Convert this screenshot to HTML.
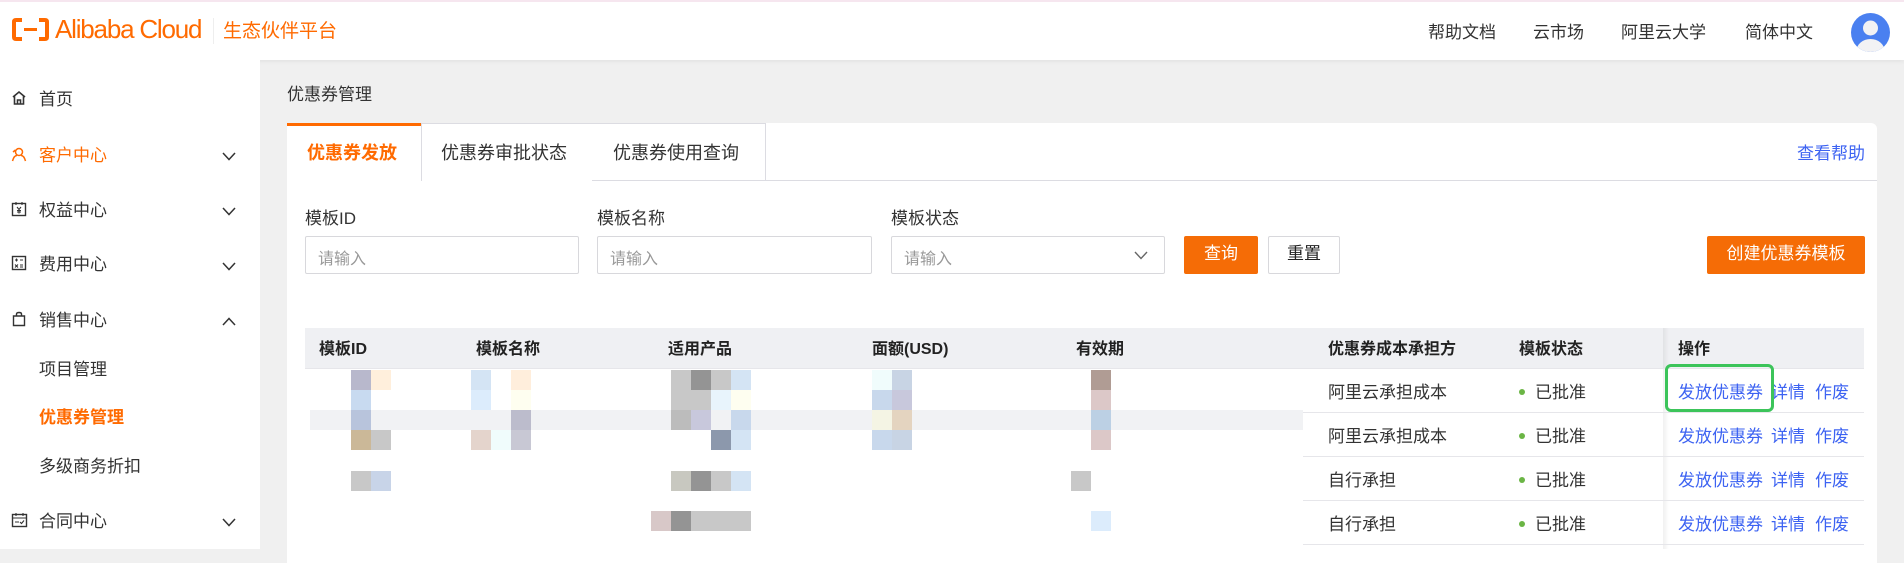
<!DOCTYPE html>
<html><head><meta charset="utf-8"><style>
*{margin:0;padding:0;box-sizing:border-box}
body{width:1904px;height:549px;overflow:hidden;background:#f0f0f0;font-family:"Liberation Sans","Noto Sans CJK SC",sans-serif;color:#333;position:relative;font-size:17px}
.a{position:absolute;white-space:nowrap}
.hdr{position:absolute;left:0;top:0;width:1904px;height:60px;background:#fff;border-top:2px solid #f6e6ef;box-shadow:0 2px 4px rgba(0,0,0,.05)}
.side{position:absolute;left:0;top:60px;width:260px;height:489px;background:#fff}
.or{color:#ff6a00}
.bl{color:#3d63f2}
.card{position:absolute;left:287px;top:123px;width:1590px;height:440px;background:#fff;border-radius:6px 6px 0 0}
.inp{position:absolute;top:236px;height:38px;border:1px solid #d8d8dc;border-radius:2px;background:#fff;color:#999;font-size:16px;padding:8px 12px}
.b{position:absolute;width:20px;height:20px}
.th{font-weight:bold;color:#222;font-size:16px}
.row{position:absolute;left:305px;width:1559px;height:1px;background:#e6e6ea}
.dot{display:inline-block;width:6px;height:6px;border-radius:50%;background:#6bb545;vertical-align:middle;margin:0 10px 4px 0}
</style></head><body>
<div class="hdr">
 <svg class="a" style="left:12px;top:16px" width="37" height="23" viewBox="0 0 37 23"><path d="M10 2H4Q2 2 2 4V19Q2 21 4 21H10M27 2H33Q35 2 35 4V19Q35 21 33 21H27" fill="none" stroke="#ff6a00" stroke-width="4"/><rect x="12" y="10" width="13" height="3" fill="#ff6a00"/></svg>
 <div class="a or" style="left:55px;top:12px;font-size:26px;letter-spacing:-1.2px;font-weight:500">Alibaba Cloud</div>
 <div class="a" style="left:213px;top:16px;width:1px;height:26px;background:#eee"></div>
 <div class="a or" style="left:223px;top:14px;font-size:19px">生态伙伴平台</div>
 <div class="a" style="left:1428px;top:16px">帮助文档</div>
 <div class="a" style="left:1533px;top:16px">云市场</div>
 <div class="a" style="left:1621px;top:16px">阿里云大学</div>
 <div class="a" style="left:1745px;top:16px">简体中文</div>
 <svg class="a" style="left:1851px;top:11px" width="39" height="39" viewBox="0 0 39 39"><defs><clipPath id="c"><circle cx="19.5" cy="19.5" r="19.5"/></clipPath></defs><circle cx="19.5" cy="19.5" r="19.5" fill="#4a80f0"/><g clip-path="url(#c)"><circle cx="19.5" cy="15" r="7.5" fill="#f2f2f4"/><ellipse cx="19.5" cy="38" rx="14" ry="12" fill="#f2f2f4"/></g></svg>
</div>
<div class="side">
 <svg class="a" style="left:11px;top:30px" width="16" height="16" viewBox="0 0 16 16"><path d="M2 7L8 2L14 7M3.5 6V14H12.5V6M6.5 14V10H9.5V14" fill="none" stroke="#333" stroke-width="1.6"/></svg>
 <div class="a" style="left:39px;top:25px">首页</div>
 <svg class="a" style="left:11px;top:86px" width="16" height="16" viewBox="0 0 16 16"><circle cx="8" cy="6" r="3.5" fill="none" stroke="#ff6a00" stroke-width="1.5"/><path d="M1.5 15Q3 9.5 6 9.5M14.5 15Q13 9.5 10 9.5M4.5 4L2 6" fill="none" stroke="#ff6a00" stroke-width="1.5"/></svg>
 <div class="a or" style="left:39px;top:81px">客户中心</div>
 <svg class="a" style="left:11px;top:141px" width="16" height="16" viewBox="0 0 16 16"><rect x="1.5" y="2.5" width="13" height="12" fill="none" stroke="#333" stroke-width="1.4"/><path d="M5 1V4M11 1V4M6 6L8 8.5L10 6M8 8.5V12.5M6 9.5H10M6 11H10" fill="none" stroke="#333" stroke-width="1.1"/></svg>
 <div class="a" style="left:39px;top:136px">权益中心</div>
 <svg class="a" style="left:11px;top:195px" width="16" height="16" viewBox="0 0 16 16"><rect x="1.5" y="1.5" width="13" height="13" fill="none" stroke="#333" stroke-width="1.4"/><path d="M4 5H7M5.5 3.5V6.5M9 5H12M4 9.5L7 12.5M7 9.5L4 12.5M9 10H12M9 12H12" fill="none" stroke="#333" stroke-width="1.1"/></svg>
 <div class="a" style="left:39px;top:190px">费用中心</div>
 <svg class="a" style="left:11px;top:251px" width="16" height="16" viewBox="0 0 16 16"><path d="M2.5 5H13.5V14.5H2.5ZM5.5 5V3Q5.5 1.5 8 1.5Q10.5 1.5 10.5 3V5" fill="none" stroke="#333" stroke-width="1.4"/></svg>
 <div class="a" style="left:39px;top:246px">销售中心</div>
 <div class="a" style="left:39px;top:295px">项目管理</div>
 <div class="a or" style="left:39px;top:343px;font-weight:bold">优惠券管理</div>
 <div class="a" style="left:39px;top:392px">多级商务折扣</div>
 <svg class="a" style="left:11px;top:452px" width="17" height="16" viewBox="0 0 17 16"><rect x="1.5" y="2.5" width="14" height="12" fill="none" stroke="#333" stroke-width="1.4"/><path d="M1.5 6H15.5M5 1V4M12 1V4M4 10H8M9 10L10.5 11.5L13 8.5" fill="none" stroke="#333" stroke-width="1.1"/></svg>
 <div class="a" style="left:39px;top:447px">合同中心</div>
 <svg class="a" style="left:222px;top:92px" width="14" height="9" viewBox="0 0 14 9"><path d="M1 1L7 7.5L13 1" fill="none" stroke="#333" stroke-width="1.5"/></svg>
 <svg class="a" style="left:222px;top:147px" width="14" height="9" viewBox="0 0 14 9"><path d="M1 1L7 7.5L13 1" fill="none" stroke="#333" stroke-width="1.5"/></svg>
 <svg class="a" style="left:222px;top:202px" width="14" height="9" viewBox="0 0 14 9"><path d="M1 1L7 7.5L13 1" fill="none" stroke="#333" stroke-width="1.5"/></svg>
 <svg class="a" style="left:222px;top:257px" width="14" height="9" viewBox="0 0 14 9"><path d="M1 8L7 1.5L13 8" fill="none" stroke="#333" stroke-width="1.5"/></svg>
 <svg class="a" style="left:222px;top:458px" width="14" height="9" viewBox="0 0 14 9"><path d="M1 1L7 7.5L13 1" fill="none" stroke="#333" stroke-width="1.5"/></svg>
</div>
<div class="a" style="left:287px;top:80px">优惠券管理</div>
<div class="card"></div>
<div class="a" style="left:287px;top:180px;width:1590px;height:1px;background:#dcdce2"></div>
<div class="a" style="left:287px;top:123px;width:134px;height:58px;background:#fff;border-top:3px solid #ff6a00"></div>
<div class="a or" style="left:307px;top:139px;font-weight:bold;font-size:18px">优惠券发放</div>
<div class="a" style="left:421px;top:123px;width:172px;height:58px;border:1px solid #dcdce2;border-bottom:none;background:#fff"></div>
<div class="a" style="left:441px;top:139px;font-size:18px">优惠券审批状态</div>
<div class="a" style="left:592px;top:123px;width:174px;height:57px;border:1px solid #dcdce2;border-bottom:none;border-left:none;background:#fff"></div>
<div class="a" style="left:613px;top:139px;font-size:18px">优惠券使用查询</div>
<div class="a bl" style="left:1797px;top:139px">查看帮助</div>
<div class="a" style="left:305px;top:204px">模板ID</div>
<div class="a" style="left:597px;top:204px">模板名称</div>
<div class="a" style="left:891px;top:204px">模板状态</div>
<div class="inp" style="left:305px;width:274px">请输入</div>
<div class="inp" style="left:597px;width:275px">请输入</div>
<div class="inp" style="left:891px;width:274px">请输入</div>
<svg class="a" style="left:1134px;top:251px" width="14" height="9" viewBox="0 0 14 9"><path d="M1 1L7 7.5L13 1" fill="none" stroke="#666" stroke-width="1.4"/></svg>
<div class="a" style="left:1184px;top:236px;width:74px;height:38px;background:#f56c06;border-radius:2px;color:#fff;text-align:center;line-height:36px">查询</div>
<div class="a" style="left:1268px;top:236px;width:72px;height:38px;border:1px solid #d8d8dc;border-radius:2px;text-align:center;line-height:34px;color:#222">重置</div>
<div class="a" style="left:1707px;top:236px;width:158px;height:38px;background:#f56c06;border-radius:2px;color:#fff;text-align:center;line-height:36px">创建优惠券模板</div>
<div class="a" style="left:305px;top:328px;width:1559px;height:40px;background:#eff0f3"></div>
<div class="a" style="left:1663px;top:328px;width:6px;height:221px;background:linear-gradient(90deg,rgba(0,0,0,.06),rgba(0,0,0,0))"></div>
<div class="a th" style="left:319px;top:335px">模板ID</div>
<div class="a th" style="left:476px;top:335px">模板名称</div>
<div class="a th" style="left:668px;top:335px">适用产品</div>
<div class="a th" style="left:872px;top:335px">面额(USD)</div>
<div class="a th" style="left:1076px;top:335px">有效期</div>
<div class="a th" style="left:1328px;top:335px">优惠券成本承担方</div>
<div class="a th" style="left:1519px;top:335px">模板状态</div>
<div class="a th" style="left:1678px;top:335px">操作</div>
<div class="row" style="top:368px"></div>
<div class="row" style="top:412px;left:1303px;width:561px"></div>
<div class="row" style="top:456px;left:1303px;width:561px"></div>
<div class="row" style="top:500px;left:1303px;width:561px"></div>
<div class="row" style="top:544px;left:1303px;width:561px"></div>
<div class="a" style="left:310px;top:410px;width:993px;height:20px;background:#f1f2f4"></div>
<!-- mosaic -->
<div class="b" style="left:351px;top:370px;background:#b8b8cc"></div><div class="b" style="left:371px;top:370px;background:#ffefdc"></div>
<div class="b" style="left:351px;top:390px;background:#c8daf0"></div>
<div class="b" style="left:351px;top:410px;background:#b8c4dc"></div>
<div class="b" style="left:351px;top:430px;background:#cbb898"></div><div class="b" style="left:371px;top:430px;background:#c8c8c8"></div>
<div class="b" style="left:351px;top:471px;background:#c8c8c8"></div><div class="b" style="left:371px;top:471px;background:#c8d4e8"></div>
<div class="b" style="left:471px;top:370px;background:#d4e4f4"></div><div class="b" style="left:511px;top:370px;background:#ffeedc"></div>
<div class="b" style="left:471px;top:390px;background:#dcecfc"></div><div class="b" style="left:511px;top:390px;background:#fefef0"></div>
<div class="b" style="left:511px;top:410px;background:#bcbccc"></div>
<div class="b" style="left:471px;top:430px;background:#e4d4cc"></div><div class="b" style="left:491px;top:430px;background:#f0fcfc"></div><div class="b" style="left:511px;top:430px;background:#c8c8d4"></div>
<div class="b" style="left:671px;top:370px;background:#c8c8c8"></div><div class="b" style="left:691px;top:370px;background:#949494"></div><div class="b" style="left:711px;top:370px;background:#c8c8c8"></div><div class="b" style="left:731px;top:370px;background:#d4e4f4"></div>
<div class="b" style="left:671px;top:390px;background:#c8c8c8"></div><div class="b" style="left:691px;top:390px;background:#c8c8c8"></div><div class="b" style="left:711px;top:390px;background:#e8f4fc"></div><div class="b" style="left:731px;top:390px;background:#fefef0"></div>
<div class="b" style="left:671px;top:410px;background:#bcbcbc"></div><div class="b" style="left:691px;top:410px;background:#c8c8dc"></div><div class="b" style="left:731px;top:410px;background:#c8d8ec"></div>
<div class="b" style="left:711px;top:430px;background:#8c98ac"></div><div class="b" style="left:731px;top:430px;background:#d4e4f4"></div>
<div class="b" style="left:671px;top:471px;background:#c8c8c0"></div><div class="b" style="left:691px;top:471px;background:#949494"></div><div class="b" style="left:711px;top:471px;background:#c8c8c8"></div><div class="b" style="left:731px;top:471px;background:#d4e4f4"></div>
<div class="b" style="left:651px;top:511px;background:#d8c8c8"></div><div class="b" style="left:671px;top:511px;background:#949494"></div><div class="b" style="left:691px;top:511px;width:60px;background:#c8c8c8"></div>
<div class="b" style="left:872px;top:370px;background:#f0fcfc"></div><div class="b" style="left:892px;top:370px;background:#c8d4e4"></div>
<div class="b" style="left:872px;top:390px;background:#c8d8ec"></div><div class="b" style="left:892px;top:390px;background:#c8c8dc"></div>
<div class="b" style="left:872px;top:410px;background:#f4f4e4"></div><div class="b" style="left:892px;top:410px;background:#e4d4c0"></div>
<div class="b" style="left:872px;top:430px;background:#c8d8ec"></div><div class="b" style="left:892px;top:430px;background:#c8d4e4"></div>
<div class="b" style="left:1091px;top:370px;background:#b09c94"></div>
<div class="b" style="left:1091px;top:390px;background:#dcc8c8"></div>
<div class="b" style="left:1091px;top:410px;background:#bcd0e4"></div>
<div class="b" style="left:1091px;top:430px;background:#dcc8c8"></div>
<div class="b" style="left:1071px;top:471px;background:#c8c8c8"></div>
<div class="b" style="left:1091px;top:511px;background:#dcecfc"></div>
<!-- rows -->
<div class="a" style="left:1328px;top:378px">阿里云承担成本</div>
<div class="a" style="left:1328px;top:422px">阿里云承担成本</div>
<div class="a" style="left:1328px;top:466px">自行承担</div>
<div class="a" style="left:1328px;top:510px">自行承担</div>
<div class="a" style="left:1519px;top:378px"><span class="dot"></span>已批准</div>
<div class="a" style="left:1519px;top:422px"><span class="dot"></span>已批准</div>
<div class="a" style="left:1519px;top:466px"><span class="dot"></span>已批准</div>
<div class="a" style="left:1519px;top:510px"><span class="dot"></span>已批准</div>
<div class="a bl" style="left:1678px;top:378px">发放优惠券</div><div class="a bl" style="left:1771px;top:378px">详情</div><div class="a bl" style="left:1815px;top:378px">作废</div>
<div class="a bl" style="left:1678px;top:422px">发放优惠券</div><div class="a bl" style="left:1771px;top:422px">详情</div><div class="a bl" style="left:1815px;top:422px">作废</div>
<div class="a bl" style="left:1678px;top:466px">发放优惠券</div><div class="a bl" style="left:1771px;top:466px">详情</div><div class="a bl" style="left:1815px;top:466px">作废</div>
<div class="a bl" style="left:1678px;top:510px">发放优惠券</div><div class="a bl" style="left:1771px;top:510px">详情</div><div class="a bl" style="left:1815px;top:510px">作废</div>
<div class="a" style="left:1665px;top:364px;width:109px;height:48px;border:3px solid #3cc45a;border-radius:6px"></div>
</body></html>
